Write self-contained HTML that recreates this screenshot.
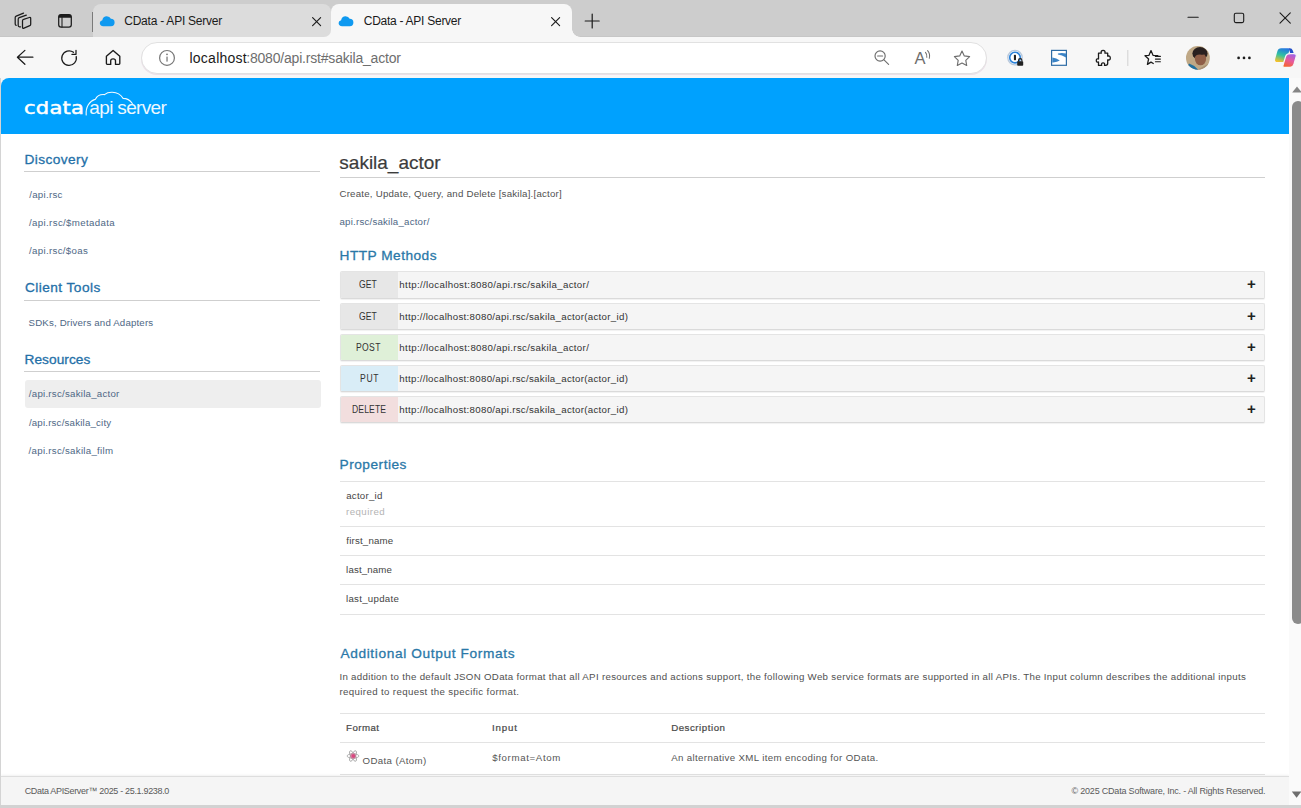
<!DOCTYPE html>
<html lang="en">
<head>
<meta charset="utf-8">
<title>CData - API Server</title>
<style>
*{box-sizing:border-box;margin:0;padding:0}
html,body{width:1301px;height:808px;overflow:hidden;background:#f7f7f7;font-family:"Liberation Sans",sans-serif}
#win{position:absolute;left:0;top:0;width:1301px;height:808px;overflow:hidden;background:#f7f7f7}
#win div,#win span.t,#win svg{position:absolute}
.t{white-space:nowrap;display:block}
/* browser chrome */
#tabbar{left:0;top:0;width:1301px;height:37px;box-shadow:inset 0 -1px 0 #c6c6c6;background:#cdcdcd}
#tab1{left:93px;top:4px;width:238px;height:33px;background:#dcdcdc;border-radius:8px 8px 7px 0}
#tab2{left:331px;top:4px;width:241px;height:33.500px;background:#f7f7f7;border-radius:8px 8px 0 0}
#tab2r{left:572px;top:29px;width:8px;height:8px;background:radial-gradient(circle at 100% 0,#cdcdcd 7.5px,#f7f7f7 8px)}
#tab1f{left:323px;top:29px;width:8px;height:8px;background:#f7f7f7}
#toolbar{left:0;top:37px;width:1301px;height:41px;background:#f7f7f7}
#addr{left:141px;top:42px;width:846px;height:32px;border-radius:16px;background:#fff;border:1px solid #e1e1e1;box-shadow:0 1px 0 #ecdfe8}
/* page */
#page{left:1px;top:78px;width:1288px;height:727px;background:#fff;border-radius:8px 0 0 0}
#hdr{left:1px;top:78px;width:1288px;height:55.500px;background:#00a1fe;border-radius:8px 0 0 0}
.ln{height:1px;background:#cfcfcf}
.ln2{height:1px;background:#e3e3e3}
#sel{left:25px;top:380px;width:296px;height:28px;background:#eeeeee;border-radius:3px}
.meth{left:340px;width:925px;height:27px;box-shadow:0 1px 1px rgba(0,0,0,.06);background:#f5f5f5;border:1px solid #e4e4e4;border-bottom-color:#dadada;border-radius:2px;overflow:hidden}
.meth i{position:absolute;left:-1px;top:-1px;width:58px;height:29px;display:block}
.plus{font-size:15px;line-height:16px;font-weight:bold;color:#222;width:10px;height:16px;text-align:center;white-space:nowrap}
#footer{left:1px;top:776px;width:1288px;height:29px;background:#f5f5f5;border-top:1px solid #dedede;box-shadow:0 -1px 2px rgba(0,0,0,.06)}
#sbtrack{left:1289px;top:78px;width:12px;height:727px;background:#fafafa}
#thumb{left:1292px;top:101px;width:12px;height:523px;background:#8b8b8b;border-radius:6px}
#bottomedge{left:0;top:805px;width:1301px;height:3px;background:#d2d2d2}
#leftedge{left:0;top:78px;width:1px;height:727px;background:#d4d4d4}
#logo1{left:24px;top:101px;width:62px;height:15px;overflow:hidden}
#logo1 span{position:absolute;left:0.3px;top:-4px;font-family:"DejaVu Sans","Liberation Sans",sans-serif;font-size:18px;font-weight:normal;color:#fff;-webkit-text-stroke:0.5px #fff;letter-spacing:0.2px;white-space:nowrap;line-height:22px;transform-origin:0 0;transform:scaleX(1.17)}
#logo2{left:89.300px;top:95.6px;font-size:19px;line-height:24px;color:#fff;white-space:nowrap;letter-spacing:-0.65px;opacity:.93}
#sh1{left:24.49px;top:151.25px;font-size:13.7px;line-height:18px;color:#2470a8;letter-spacing:0.403px;-webkit-text-stroke:0.3px #2470a8}
#sl1{left:29.17px;top:188.14px;font-size:9.7px;line-height:13px;color:#4e6785;letter-spacing:0.292px;}
#sl2{left:29.07px;top:216.14px;font-size:9.7px;line-height:13px;color:#4e6785;letter-spacing:0.348px;}
#sl3{left:29.07px;top:244.14px;font-size:9.7px;line-height:13px;color:#4e6785;letter-spacing:0.313px;}
#sh2{left:24.94px;top:279.25px;font-size:13.7px;line-height:18px;color:#2470a8;letter-spacing:0.443px;-webkit-text-stroke:0.3px #2470a8}
#sl4{left:28.56px;top:316.14px;font-size:9.7px;line-height:13px;color:#4e6785;letter-spacing:0.159px;}
#sh3{left:24.54px;top:351.25px;font-size:13.7px;line-height:18px;color:#2470a8;letter-spacing:0.040px;-webkit-text-stroke:0.3px #2470a8}
#sl5{left:28.82px;top:387.14px;font-size:9.7px;line-height:13px;color:#4e6785;letter-spacing:0.245px;}
#sl6{left:28.89px;top:416.14px;font-size:9.7px;line-height:13px;color:#4e6785;letter-spacing:0.194px;}
#sl7{left:28.61px;top:444.14px;font-size:9.7px;line-height:13px;color:#4e6785;letter-spacing:0.275px;}
#h1{left:339.34px;top:149.92px;font-size:19px;line-height:25px;color:#3c3c3c;letter-spacing:-0.005px;-webkit-text-stroke:0.2px #3c3c3c}
#d1{left:339.44px;top:187.14px;font-size:9.7px;line-height:13px;color:#505050;letter-spacing:0.222px;}
#d2{left:339.47px;top:215.14px;font-size:9.7px;line-height:13px;color:#4e6785;letter-spacing:0.213px;}
#h2a{left:339.54px;top:247.25px;font-size:13.7px;line-height:18px;color:#2a78a8;letter-spacing:0.472px;-webkit-text-stroke:0.3px #2a78a8}
#v1{left:359.15px;top:278.04px;font-size:10px;line-height:13px;color:#333333;letter-spacing:0.096px;transform:scaleX(.86);transform-origin:0 0}
#v2{left:359.15px;top:310.04px;font-size:10px;line-height:13px;color:#333333;letter-spacing:0.096px;transform:scaleX(.86);transform-origin:0 0}
#v3{left:356.40px;top:341.04px;font-size:10px;line-height:13px;color:#333333;letter-spacing:0.380px;transform:scaleX(.86);transform-origin:0 0}
#v4{left:359.54px;top:372.04px;font-size:10px;line-height:13px;color:#333333;letter-spacing:0.753px;transform:scaleX(.86);transform-origin:0 0}
#v5{left:352.42px;top:403.04px;font-size:10px;line-height:13px;color:#333333;letter-spacing:0.125px;transform:scaleX(.86);transform-origin:0 0}
#u1{left:399.37px;top:278.14px;font-size:9.7px;line-height:13px;color:#333333;letter-spacing:0.345px;}
#u2{left:399.33px;top:310.14px;font-size:9.7px;line-height:13px;color:#333333;letter-spacing:0.300px;}
#u3{left:399.37px;top:341.14px;font-size:9.7px;line-height:13px;color:#333333;letter-spacing:0.345px;}
#u4{left:399.33px;top:372.14px;font-size:9.7px;line-height:13px;color:#333333;letter-spacing:0.300px;}
#u5{left:399.33px;top:403.14px;font-size:9.7px;line-height:13px;color:#333333;letter-spacing:0.300px;}
#h2b{left:339.54px;top:456.25px;font-size:13.7px;line-height:18px;color:#2a78a8;letter-spacing:0.505px;-webkit-text-stroke:0.3px #2a78a8}
#p1{left:346.23px;top:489.14px;font-size:9.7px;line-height:13px;color:#444;letter-spacing:0.242px;}
#p1r{left:346.09px;top:505.14px;font-size:9.7px;line-height:13px;color:#b4b4b4;letter-spacing:0.425px;}
#p2{left:346.36px;top:534.14px;font-size:9.7px;line-height:13px;color:#444;letter-spacing:0.180px;}
#p3{left:346.10px;top:563.14px;font-size:9.7px;line-height:13px;color:#444;letter-spacing:0.147px;}
#p4{left:345.95px;top:592.14px;font-size:9.7px;line-height:13px;color:#444;letter-spacing:0.286px;}
#h2c{left:340.43px;top:645.25px;font-size:13.7px;line-height:18px;color:#2a78a8;letter-spacing:0.632px;-webkit-text-stroke:0.3px #2a78a8}
#a1{left:339.40px;top:670.14px;font-size:9.7px;line-height:13px;color:#505050;letter-spacing:0.311px;}
#a2{left:339.50px;top:685.14px;font-size:9.7px;line-height:13px;color:#505050;letter-spacing:0.361px;}
#t1{left:346.08px;top:721.14px;font-size:9.7px;line-height:13px;color:#4a4a4a;letter-spacing:0.452px;-webkit-text-stroke:0.22px #4a4a4a}
#t2{left:492.01px;top:721.14px;font-size:9.7px;line-height:13px;color:#4a4a4a;letter-spacing:0.837px;-webkit-text-stroke:0.22px #4a4a4a}
#t3{left:671.17px;top:721.14px;font-size:9.7px;line-height:13px;color:#4a4a4a;letter-spacing:0.532px;-webkit-text-stroke:0.22px #4a4a4a}
#o1{left:362.56px;top:754.14px;font-size:9.7px;line-height:13px;color:#555;letter-spacing:0.362px;}
#o2{left:492.15px;top:751.14px;font-size:9.7px;line-height:13px;color:#555;letter-spacing:0.647px;}
#o3{left:671.13px;top:751.14px;font-size:9.7px;line-height:13px;color:#555;letter-spacing:0.362px;}
#f1{left:24.70px;top:784.88px;font-size:9px;line-height:12px;color:#5a5a5a;letter-spacing:-0.321px;}
#f2{left:1071.50px;top:784.88px;font-size:9px;line-height:12px;color:#5a5a5a;letter-spacing:-0.198px;}
#tt1{left:124.28px;top:12.84px;font-size:12px;line-height:16px;color:#1a1a1a;letter-spacing:-0.240px;}
#tt2{left:363.74px;top:12.84px;font-size:12px;line-height:16px;color:#1a1a1a;letter-spacing:-0.266px;}
#url1{left:189.51px;top:49.15px;font-size:14px;line-height:18px;color:#1a1a1a;letter-spacing:0.238px;}
#url2{left:246.20px;top:49.15px;font-size:14px;line-height:18px;color:#6e6e6e;letter-spacing:-0.190px;}
</style>
</head>
<body>
<div id="win">
  <div id="tabbar"></div>
  <div id="toolbar"></div>
  <div id="tab1f"></div><div id="tab1"></div>
  <div id="tab2"></div><div id="tab2r"></div>
  <div id="addr"></div>
  <svg style="left:0;top:0" width="1301" height="78" viewBox="0 0 1301 78">
<defs>
<linearGradient id="cpl" x1="0.6" y1="0" x2="0.3" y2="1"><stop offset="0" stop-color="#2478e0"/><stop offset="0.5" stop-color="#2fc2a2"/><stop offset="1" stop-color="#f6c12a"/></linearGradient>
<linearGradient id="cpr" x1="0.7" y1="0" x2="0.3" y2="1"><stop offset="0" stop-color="#9a62ea"/><stop offset="0.5" stop-color="#e85a9c"/><stop offset="1" stop-color="#f56428"/></linearGradient>
<clipPath id="avc"><circle cx="1197.900" cy="57.900" r="11.900"/></clipPath>
</defs>
<g fill="none" stroke="#1b1b1b" stroke-width="1.25" stroke-linecap="round" stroke-linejoin="round">
<!-- workspaces -->
<path d="M23.600 19.300L29.400 17.500Q30.700 17.100 30.700 18.500V24.300Q30.700 25.300 29.800 25.700L24 28.100Q22.500 28.700 22.500 27.200V20.700Q22.500 19.600 23.600 19.300Z"/>
<path d="M20.500 26.800H19.400Q18.200 26.800 18.200 25.600V19.200Q18.200 18.100 19.300 17.700L26.300 15.100"/>
<path d="M16.200 25.300Q15.200 25 15.200 23.900V17.500Q15.200 16.500 16.200 16.100L23.500 13.100"/>
<!-- tab actions -->
<rect x="58.700" y="14.600" width="12.600" height="12.600" rx="2.400"/>
<path d="M62 17.500V27" stroke-width="1.050"/>
<!-- tab close x -->
<path d="M312.600 17.600L320.600 25.600M320.600 17.600L312.600 25.600" stroke-width="1.15"/>
<path d="M551.600 17.600L559.600 25.600M559.600 17.600L551.600 25.600" stroke-width="1.15"/>
<!-- new tab + -->
<path d="M585.200 21H599.200M592.200 14V28" stroke-width="1.2"/>
<!-- window controls -->
<path d="M1188 17.300H1198.200" stroke-width="1.1"/>
<rect x="1234.300" y="13.200" width="9.400" height="9.400" rx="1.500" stroke-width="1.1"/>
<path d="M1280 12.800L1290.300 23.100M1290.300 12.800L1280 23.100" stroke-width="1.1"/>
<!-- back -->
<path d="M32.900 57.200H17.400M24.900 50.400L17.400 57.200L24.900 64.300"/>
<!-- refresh -->
<path d="M76.200 56.500A7.300 7.300 0 1 1 73.500 52.300"/>
<path d="M76 50.300V54.300H71.900"/>
<!-- home -->
<path d="M106.400 56.300L113.100 50.400L119.800 56.300V63.600Q119.800 64.400 119 64.400H115.500V60.800Q115.500 58.900 113.100 58.900Q110.700 58.900 110.700 60.800V64.400H107.200Q106.400 64.400 106.400 63.600Z" stroke-width="1.35"/>
<!-- puzzle -->
<path d="M1098.500 53.200H1101.300Q1100.600 50.400 1103.100 50.400Q1105.600 50.400 1104.900 53.200H1107.700V56.200Q1110.300 55.400 1110.300 58Q1110.300 60.600 1107.700 59.800V63.300Q1107.700 65.400 1105.700 65.400H1104.500Q1105.200 62.900 1103.100 62.900Q1101 62.900 1101.700 65.400H1098.500V62Q1096.300 62.700 1096.300 60.500Q1096.300 58.300 1098.500 59Z" stroke-width="1.3"/>
<!-- favorites star w/ lines -->
<path d="M1151 50.600L1153 55.300L1157.800 55.700M1145 55.700L1149 55.300L1151 50.600M1145 55.700L1148.600 59L1147.400 64.400L1151 62.100L1153.300 63.500"/>
<path d="M1155.400 56.400H1160.400M1155.400 59.100H1160.400M1155.400 61.800H1160.400" stroke-width="1.1"/>
</g>
<!-- tab actions top bar -->
<path d="M58.700 17.800V17Q58.700 14.600 61.100 14.600H68.900Q71.300 14.600 71.300 17V17.800Z" fill="#1b1b1b"/>
<!-- separator -->
<rect x="92" y="12" width="1" height="20" fill="#7a7a7a"/>
<rect x="1127.300" y="50" width="1" height="16" fill="#d2d2d2"/>
<!-- favicons -->
<path id="fav" d="M103.300 26.200Q99.800 26.200 99.800 23.100Q99.800 20.600 102.300 20.200Q103 16.300 106.800 16.300Q109.700 16.300 110.900 18.800Q114.600 18.900 114.600 22.500Q114.600 26.200 111 26.200Z" fill="#0f99f0"/>
<path d="M342.100 26.200Q338.600 26.200 338.600 23.100Q338.600 20.600 341.100 20.200Q341.800 16.300 345.600 16.300Q348.500 16.300 349.700 18.800Q353.400 18.900 353.400 22.500Q353.400 26.200 349.800 26.200Z" fill="#0f99f0"/>
<!-- info icon -->
<circle cx="167" cy="57.900" r="7.400" fill="none" stroke="#767676" stroke-width="1.2"/>
<rect x="166.400" y="56.600" width="1.250" height="5" fill="#767676"/><circle cx="167" cy="54.300" r="0.900" fill="#767676"/>
<!-- zoom out -->
<g fill="none" stroke="#6e6e6e" stroke-width="1.15" stroke-linecap="round">
<circle cx="880.100" cy="56" r="5.100"/><path d="M884 59.900L888.600 64.400M877.600 56H882.600"/>
<!-- read aloud waves -->
<path d="M925.500 52.300Q927.300 54.300 926.800 57.300M927.600 50.600Q930.400 53.800 929.300 58.300" stroke-width="1.050"/>
<!-- star -->
<path d="M962 51.100L964.300 55.900L969.600 56.600L965.800 60.300L966.700 65.500L962 63L957.300 65.500L958.200 60.300L954.400 56.600L959.700 55.900Z" stroke-linejoin="round"/>
</g>
<text x="914.600" y="63.700" font-family="Liberation Sans, sans-serif" font-size="16.500" fill="#6e6e6e">A</text>
<!-- ext icon 1 -->
<circle cx="1015" cy="57.600" r="7.200" fill="#fff" stroke="#b9c9dc" stroke-width="1.300"/>
<circle cx="1015" cy="57.600" r="5.300" fill="none" stroke="#2b82d9" stroke-width="1.600"/>
<rect x="1013.900" y="54.800" width="2.100" height="5.400" rx=".6" fill="#222"/>
<path d="M1018.500 61.600V60.300Q1018.500 58.600 1020.200 58.600Q1021.900 58.600 1021.900 60.300V61.600" fill="none" stroke="#222" stroke-width="1.100"/>
<rect x="1017.200" y="61.300" width="6" height="4.400" rx=".8" fill="#222"/>
<!-- S icon -->
<rect x="1051.600" y="50.400" width="14.800" height="14.900" fill="#fff" stroke="#2f6da6" stroke-width="1.200"/>
<path d="M1052.300 57.400Q1056.500 58 1059.800 60.600Q1057 62.600 1052.300 62.400ZM1057.900 53.600Q1061.500 52.400 1066 53.600V57.600Q1062 55 1057.900 54.600Z" fill="#3a83c6"/>
<!-- avatar -->
<g clip-path="url(#avc)">
<rect x="1185" y="45" width="26" height="26" fill="#bfa886"/>
<ellipse cx="1200" cy="53.500" rx="7.600" ry="6.500" fill="#2a2120"/>
<ellipse cx="1200.500" cy="59" rx="5.600" ry="6.300" fill="#8f5e47"/>
<path d="M1193.200 52Q1200 46.500 1207 52Q1206 55.500 1200 54.500Q1195 55 1193.200 57Z" fill="#2a2120"/>
<path d="M1186 70L1189 63.500Q1194 65 1198 69.500L1197 72Z" fill="#1f6f9f"/>
<path d="M1198 69.500Q1203 66.500 1208 64L1211 71H1197Z" fill="#a89074"/>
</g>
<!-- dots -->
<circle cx="1238.600" cy="57.900" r="1.350" fill="#1b1b1b"/><circle cx="1244" cy="57.900" r="1.350" fill="#1b1b1b"/><circle cx="1249.400" cy="57.900" r="1.350" fill="#1b1b1b"/>
<!-- copilot -->
<path d="M1281.200 48.300H1288Q1290 48.300 1289.400 50.300L1286.700 59.300Q1285.900 62 1283.200 62H1277.500Q1274.300 62 1275.200 58.900L1277.300 51.500Q1278.200 48.300 1281.200 48.300Z" fill="url(#cpl)"/>
<path d="M1288.200 48.300H1289.800Q1292 48.300 1292.800 50.600L1293.800 53.600H1290.300L1289.400 50.300Q1289 48.500 1288.200 48.300Z" fill="#2350c8"/>
<path d="M1290.600 53.600H1293.700Q1297 53.600 1296.100 56.700L1294 64.100Q1293.100 67.300 1290.100 67.300H1284.600Q1282.300 67.300 1283 65.200L1285.600 56.500Q1286.500 53.600 1290.600 53.600Z" fill="url(#cpr)" stroke="#f7f7f7" stroke-width="1.2"/>
</svg>


  <div id="page"></div>
  <div id="hdr"></div>
  <div id="logo1"><span>cdata</span></div>
  <div id="logo2">api server</div>
  <svg style="left:84px;top:90px" width="52" height="30" viewBox="0 0 52 30"><path d="M2.2 25C1.5 17 5.5 11 11.4 9.300C13 6 17 4.300 20.5 4.600C23 2.600 26 2.200 28.300 2.300C33.5 2.500 37 5 39 8.300C42.5 8.300 46 10 48.300 13.500" fill="none" stroke="#fff" stroke-width="1.150" stroke-linecap="round" opacity=".95"/></svg>

  <div class="ln" style="left:24px;top:171px;width:296px"></div>
  <div class="ln" style="left:24px;top:300px;width:296px"></div>
  <div class="ln" style="left:24px;top:371px;width:296px"></div>
  <div id="sel"></div>

  <div class="ln" style="left:340px;top:177px;width:925px"></div>
  <div class="meth" style="top:271px;height:28px"><i style="background:#e7e7e7"></i></div>
  <div class="meth" style="top:303px"><i style="background:#e7e7e7"></i></div>
  <div class="meth" style="top:334px"><i style="background:#dff0d8"></i></div>
  <div class="meth" style="top:365px"><i style="background:#d9edf7"></i></div>
  <div class="meth" style="top:396px"><i style="background:#f2dede"></i></div>
  <div class="plus" style="left:1246.300px;top:276.0px">+</div>
  <div class="plus" style="left:1246.300px;top:308.0px">+</div>
  <div class="plus" style="left:1246.300px;top:338.8px">+</div>
  <div class="plus" style="left:1246.300px;top:369.8px">+</div>
  <div class="plus" style="left:1246.300px;top:400.8px">+</div>

  <div class="ln2" style="left:340px;top:481px;width:925px"></div>
  <div class="ln2" style="left:340px;top:526px;width:925px"></div>
  <div class="ln2" style="left:340px;top:555px;width:925px"></div>
  <div class="ln2" style="left:340px;top:584px;width:925px"></div>
  <div class="ln2" style="left:340px;top:614px;width:925px"></div>
  <div class="ln2" style="left:340px;top:713px;width:925px"></div>
  <div class="ln2" style="left:340px;top:742px;width:925px"></div>
  <div class="ln2" style="left:340px;top:774px;width:925px"></div>
  <svg style="left:346px;top:749.200px" width="14" height="14" viewBox="0 0 14 14"><g fill="none" stroke="#9c9c9c" stroke-width="0.75"><ellipse cx="7" cy="7" rx="5.900" ry="2.200"/><ellipse cx="7" cy="7" rx="5.900" ry="2.200" transform="rotate(60 7 7)"/><ellipse cx="7" cy="7" rx="5.900" ry="2.200" transform="rotate(120 7 7)"/></g><circle cx="7.200" cy="7" r="3.300" fill="#e0457e" opacity=".28"/><circle cx="7.200" cy="7" r="2" fill="#d63a76" opacity=".9"/></svg>

  <div id="footer"></div>
  <div id="sbtrack"></div>
  <div id="thumb"></div>
  <svg style="left:1289px;top:84px" width="12" height="12" viewBox="0 0 12 12"><path d="M3.2 8.500L8 2.500L12.8 8.500Z" fill="#858585"/></svg>
  <svg style="left:1289px;top:788px" width="12" height="12" viewBox="0 0 12 12"><path d="M2.800 3.500L7.600 9.800L12.400 3.500Z" fill="#6e6e6e"/></svg>
  <div id="leftedge"></div>
  <div id="bottomedge"></div>

<span class="t" id="sh1">Discovery</span>
<span class="t" id="sl1">/api.rsc</span>
<span class="t" id="sl2">/api.rsc/$metadata</span>
<span class="t" id="sl3">/api.rsc/$oas</span>
<span class="t" id="sh2">Client Tools</span>
<span class="t" id="sl4">SDKs, Drivers and Adapters</span>
<span class="t" id="sh3">Resources</span>
<span class="t" id="sl5">/api.rsc/sakila_actor</span>
<span class="t" id="sl6">/api.rsc/sakila_city</span>
<span class="t" id="sl7">/api.rsc/sakila_film</span>
<span class="t" id="h1">sakila_actor</span>
<span class="t" id="d1">Create, Update, Query, and Delete [sakila].[actor]</span>
<span class="t" id="d2">api.rsc/sakila_actor/</span>
<span class="t" id="h2a">HTTP Methods</span>
<span class="t" id="v1">GET</span>
<span class="t" id="v2">GET</span>
<span class="t" id="v3">POST</span>
<span class="t" id="v4">PUT</span>
<span class="t" id="v5">DELETE</span>
<span class="t" id="u1">http://localhost:8080/api.rsc/sakila_actor/</span>
<span class="t" id="u2">http://localhost:8080/api.rsc/sakila_actor(actor_id)</span>
<span class="t" id="u3">http://localhost:8080/api.rsc/sakila_actor/</span>
<span class="t" id="u4">http://localhost:8080/api.rsc/sakila_actor(actor_id)</span>
<span class="t" id="u5">http://localhost:8080/api.rsc/sakila_actor(actor_id)</span>
<span class="t" id="h2b">Properties</span>
<span class="t" id="p1">actor_id</span>
<span class="t" id="p1r">required</span>
<span class="t" id="p2">first_name</span>
<span class="t" id="p3">last_name</span>
<span class="t" id="p4">last_update</span>
<span class="t" id="h2c">Additional Output Formats</span>
<span class="t" id="a1">In addition to the default JSON OData format that all API resources and actions support, the following Web service formats are supported in all APIs. The Input column describes the additional inputs</span>
<span class="t" id="a2">required to request the specific format.</span>
<span class="t" id="t1">Format</span>
<span class="t" id="t2">Input</span>
<span class="t" id="t3">Description</span>
<span class="t" id="o1">OData (Atom)</span>
<span class="t" id="o2">$format=Atom</span>
<span class="t" id="o3">An alternative XML item encoding for OData.</span>
<span class="t" id="f1">CData APIServer™ 2025 - 25.1.9238.0</span>
<span class="t" id="f2">© 2025 CData Software, Inc. - All Rights Reserved.</span>
<span class="t" id="tt1">CData - API Server</span>
<span class="t" id="tt2">CData - API Server</span>
<span class="t" id="url1">localhost</span>
<span class="t" id="url2">:8080/api.rst#sakila_actor</span>
</div>
</body>
</html>
